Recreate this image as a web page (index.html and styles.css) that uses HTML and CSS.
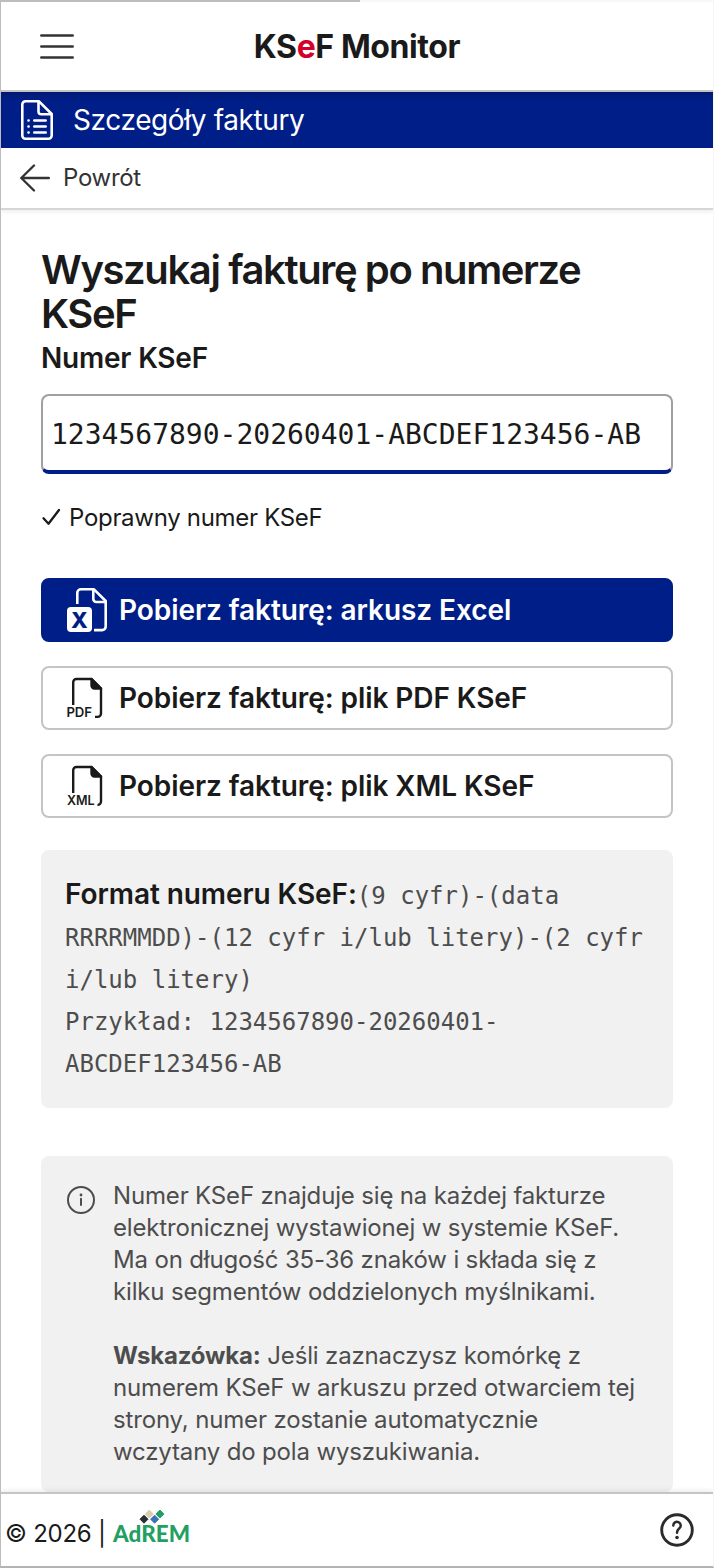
FILE: index.html
```html
<!DOCTYPE html>
<html lang="pl">
<head>
    <meta charset="utf-8">
    <title>KSeF Monitor</title>
    <link rel="stylesheet" href="styles.css">
</head>
<body>
<div class="progress"><div class="progress-bar"></div></div>

<header class="topbar">
    <svg class="menu-icon" width="34" height="26" viewBox="0 0 34 26" fill="none" stroke="#333" stroke-width="2.5" stroke-linecap="round">
        <path d="M1.3 1.5H32.7M1.3 12.5H32.7M1.3 23.5H32.7"/>
    </svg>
    <span class="brand">KS<span class="brand-red">e</span>F Monitor</span>
</header>

<div class="section-bar">
    <svg width="32" height="40" viewBox="0 0 32 40" fill="none" stroke="#fff" stroke-width="2.6" stroke-linecap="round" stroke-linejoin="round">
        <path d="M4.5 1.3H18L30.7 14V35.5a3.2 3.2 0 0 1-3.2 3.2H4.5a3.2 3.2 0 0 1-3.2-3.2V4.5A3.2 3.2 0 0 1 4.5 1.3Z"/>
        <path d="M17.5 1.8V11.5a2.8 2.8 0 0 0 2.8 2.8H30.2"/>
        <path d="M13.3 20.5H24.7M13.3 26.5H24.7M13.3 32.5H24.7M7.5 20.5h.1M7.5 26.5h.1M7.5 32.5h.1"/>
    </svg>
    <span class="section-title">Szczegóły faktury</span>
</div>

<a class="back">
    <svg width="30" height="28" viewBox="0 0 30 28" fill="none" stroke="#333" stroke-width="2.4" stroke-linecap="round" stroke-linejoin="round">
        <path d="M14 1.5L1.3 14L14 26.5M1.3 14H28.8"/>
    </svg>
    <span class="back-text">Powrót</span>
</a>

<main class="content">
    <h1>Wyszukaj fakturę po numerze KSeF</h1>
    <label class="label" for="ksef">Numer KSeF</label>
    <input class="ksef-input" id="ksef" type="text" value="1234567890-20260401-ABCDEF123456-AB">
    <div class="status">
        <svg width="20" height="18" viewBox="0 0 20 18" fill="none" stroke="#1a1a1a" stroke-width="2.3" stroke-linecap="round" stroke-linejoin="round">
            <path d="M2.5 10.3L7.5 15.7L18 2"/>
        </svg>
        <span>Poprawny numer KSeF</span>
    </div>

    <div class="buttons">
        <button class="button button-primary">
            <svg width="40" height="44" viewBox="0 0 40 44" fill="none" stroke="#fff" stroke-width="2.6" stroke-linejoin="round">
                <path d="M10.3 16V4.9a3.6 3.6 0 0 1 3.6-3.6H27L38.7 13V38.5a3.6 3.6 0 0 1-3.6 3.6H27"/>
                <path d="M26.3 1.5V11a3 3 0 0 0 3 3H38.5"/>
                <rect x="0" y="19" width="25" height="25" rx="4" fill="#fff" stroke="none"/>
                <text class="icon-x" x="12.4" y="39.6" text-anchor="middle">X</text>
            </svg>
            <span>Pobierz fakturę: arkusz Excel</span>
        </button>
        <button class="button">
            <svg width="40" height="44" viewBox="0 0 40 44" fill="none" stroke="#1a1a1a" stroke-width="2.4">
                <path d="M6.2 29V6.2a3.2 3.2 0 0 1 3.2-3.2H24.5L34 12.5V37.5a3.4 3.4 0 0 1-3.4 3.4H28"/>
                <path d="M24.5 3V9.5a3 3 0 0 0 3 3H34Z" fill="#1a1a1a" stroke-linejoin="round"/>
                <text class="icon-label" x="-.6" y="41.3" textLength="25.5" lengthAdjust="spacingAndGlyphs">PDF</text>
            </svg>
            <span>Pobierz fakturę: plik PDF KSeF</span>
        </button>
        <button class="button">
            <svg width="40" height="44" viewBox="0 0 40 44" fill="none" stroke="#1a1a1a" stroke-width="2.4">
                <path d="M6.2 29V6.2a3.2 3.2 0 0 1 3.2-3.2H24.5L34 12.5V37.5a3.4 3.4 0 0 1-3.4 3.4H30.5"/>
                <path d="M24.5 3V9.5a3 3 0 0 0 3 3H34Z" fill="#1a1a1a" stroke-linejoin="round"/>
                <text class="icon-label" x="0" y="41.3" textLength="27.5" lengthAdjust="spacingAndGlyphs">XML</text>
            </svg>
            <span>Pobierz fakturę: plik XML KSeF</span>
        </button>
    </div>

    <div class="format">
        <strong>Format numeru KSeF:</strong><code>(9 cyfr)-(data RRRRMMDD)-(12 cyfr i/lub litery)-(2 cyfr i/lub litery)<br>Przykład: 1234567890-20260401-ABCDEF123456-AB</code>
    </div>

    <div class="info">
        <svg width="28" height="28" viewBox="0 0 28 28" fill="none" stroke="#4d4d4d" stroke-width="2" stroke-linecap="round">
            <circle cx="14" cy="14" r="13"/>
            <path d="M14 12.8V19"/>
            <circle cx="14" cy="9" r="1.4" fill="#4d4d4d" stroke="none"/>
        </svg>
        <div class="info-text">
            <p>Numer KSeF znajduje się na każdej fakturze elektronicznej wystawionej w systemie KSeF. Ma on długość 35-36 znaków i składa się z kilku segmentów oddzielonych myślnikami.</p>
            <p><b>Wskazówka:</b> Jeśli zaznaczysz komórkę z numerem KSeF w arkuszu przed otwarciem tej strony, numer zostanie automatycznie wczytany do pola wyszukiwania.</p>
        </div>
    </div>
</main>

<footer class="footer">
    <span class="copy">© 2026 |</span>
    <svg class="logo" width="78" height="34" viewBox="0 0 78 34">
        <path d="M31 4.2l4 4-4 4-4-4z" fill="#2b2e30" stroke="#2b2e30" stroke-linejoin="round"/>
        <path d="M36.3-1l4 4-4 4-4-4z" fill="#dacdab" stroke="#dacdab" stroke-linejoin="round"/>
        <path d="M41.6 4.2l4 4-4 4-4-4z" fill="#3c71b8" stroke="#3c71b8" stroke-linejoin="round"/>
        <path d="M46.9-1l4 4-4 4-4-4z" fill="#239f64" stroke="#239f64" stroke-linejoin="round"/>
        <text class="logo-text" x="0" y="31" textLength="77" lengthAdjust="spacingAndGlyphs">AdREM</text>
    </svg>
    <svg class="help" width="34" height="34" viewBox="0 0 34 34" fill="none" stroke="#2b2b2b" stroke-width="2.9" stroke-linecap="round">
        <circle cx="17" cy="17" r="15.3"/>
        <path d="M13.3 12.5a3.7 3.7 0 1 1 6.2 2.7C18.2 16.4 17 17.2 17 19.8" stroke-width="2.5"/>
        <circle cx="17" cy="24.5" r="1.8" fill="#2b2b2b" stroke="none"/>
    </svg>
</footer>
</body>
</html>
```
FILE: styles.css
```css
* {
    box-sizing: border-box;
}

body {
    margin: 0;
    height: 1568px;
    display: flex;
    flex-direction: column;
    overflow: hidden;
    border-left: 1px solid #bdbdbd;
    border-right: 1px solid #f6f6f6;
    border-bottom: 2px solid #b3b3b3;
    background-color: #fff;
    color: #1a1a1a;
    font-family: Inter, "Liberation Sans", sans-serif;
    font-size: 24px;
}

.progress {
    height: 2px;
    flex: none;
    background-color: #f8f8f8;
}
.progress-bar {
    width: 359px;
    height: 2px;
    background-color: #bdbdbd;
}

.topbar {
    height: 90px;
    flex: none;
    display: grid;
    grid-template-columns: 1fr auto 1fr;
    align-items: center;
    padding: 0 39px;
    border-bottom: 2px solid #c4c4c4;
}
.menu-icon {
    margin-top: 2px;
}
.brand {
    font-size: 32px;
    font-weight: 700;
    letter-spacing: -0.4px;
    padding-top: 1px;
}
.brand-red { color: #d4002a; }

.section-bar {
    height: 56px;
    flex: none;
    display: flex;
    align-items: center;
    gap: 20px;
    padding-left: 20px;
    background-color: #001e87;
    box-shadow: inset 0 6px 5px -3px rgba(0, 0, 0, 0.2);
    color: #fff;
}
.section-title {
    font-size: 28px;
    letter-spacing: -0.38px;
}

.back {
    height: 62px;
    flex: none;
    display: flex;
    align-items: center;
    gap: 13px;
    padding-left: 19px;
    border-bottom: 2px solid #d6d6d6;
    box-shadow: 0 2px 4px rgba(0, 0, 0, 0.07);
    color: #333;
    letter-spacing: -0.3px;
}
.back-text {
    padding-bottom: 2px;
}

.content {
    flex: 1;
    min-height: 0;
    overflow: hidden;
    padding: 38px 40px 0;
}

h1 {
    margin: 0;
    font-size: 40px;
    line-height: 44px;
    font-weight: 600;
    letter-spacing: -1.4px;
}

.label {
    display: block;
    font-size: 28px;
    line-height: 40px;
    font-weight: 600;
    letter-spacing: -0.2px;
    margin-top: 2px;
    margin-bottom: 16px;
}

.ksef-input {
    display: block;
    width: 100%;
    height: 80px;
    padding: 2px 8px 0;
    border: 2px solid #a0a0a0;
    border-bottom: 4px solid #001e87;
    border-radius: 8px;
    background-color: #fff;
    color: #1a1a1a;
    font-family: "DejaVu Sans Mono", monospace;
    font-size: 28px;
    outline: none;
}

.status {
    display: flex;
    align-items: center;
    gap: 8px;
    height: 32px;
    margin-top: 27px;
    letter-spacing: -0.3px;
}

.buttons {
    display: flex;
    flex-direction: column;
    gap: 24px;
    margin-top: 45px;
}
.button {
    display: flex;
    align-items: center;
    gap: 12px;
    height: 64px;
    padding: 0 24px;
    border: 2px solid #c4c4c4;
    border-radius: 8px;
    background-color: #fff;
    color: #1a1a1a;
    font-family: inherit;
    font-size: 28px;
    font-weight: 600;
    letter-spacing: -0.07px;
}
.button-primary {
    border-color: #001e87;
    background-color: #001e87;
    color: #fff;
}

.icon-x {
    fill: #001e87;
    stroke: none;
    font-size: 22px;
    font-weight: 800;
}
.icon-label {
    fill: #1a1a1a;
    stroke: none;
    font-size: 13px;
    font-weight: 600;
}

.format {
    margin-top: 32px;
    height: 258px;
    padding: 23px 24px;
    border-radius: 8px;
    background-color: #f1f1f1;
    line-height: 42px;
}
.format strong {
    font-size: 28px;
    font-weight: 600;
    letter-spacing: -0.07px;
}
.format code {
    color: #4d4d4d;
    font-family: "DejaVu Sans Mono", monospace;
    font-size: 24px;
}

.info {
    display: flex;
    gap: 18px;
    margin-top: 48px;
    height: 336px;
    padding: 24px 24px 0 26px;
    border-radius: 8px;
    background-color: #f1f1f1;
    color: #4d4d4d;
    letter-spacing: -0.16px;
}
.info svg {
    flex: none;
    margin-top: 6px;
}
.info-text p {
    margin: 0 0 32px;
    line-height: 32px;
}

.footer {
    height: 74px;
    flex: none;
    display: flex;
    align-items: center;
    padding: 4px 19px 0 4px;
    border-top: 2px solid #c4c4c4;
    box-shadow: 0 -2px 4px rgba(0, 0, 0, 0.07);
    background-color: #fff;
}
.copy {
    letter-spacing: -0.25px;
    padding-top: 3px;
}
.logo {
    overflow: visible;
    margin-left: 7px;
    margin-top: -8px;
}
.logo-text {
    fill: #239f64;
    font-family: Lato, sans-serif;
    font-size: 23px;
    font-weight: 900;
    letter-spacing: 0;
}
.help {
    margin-left: auto;
    margin-top: -4px;
}
```
